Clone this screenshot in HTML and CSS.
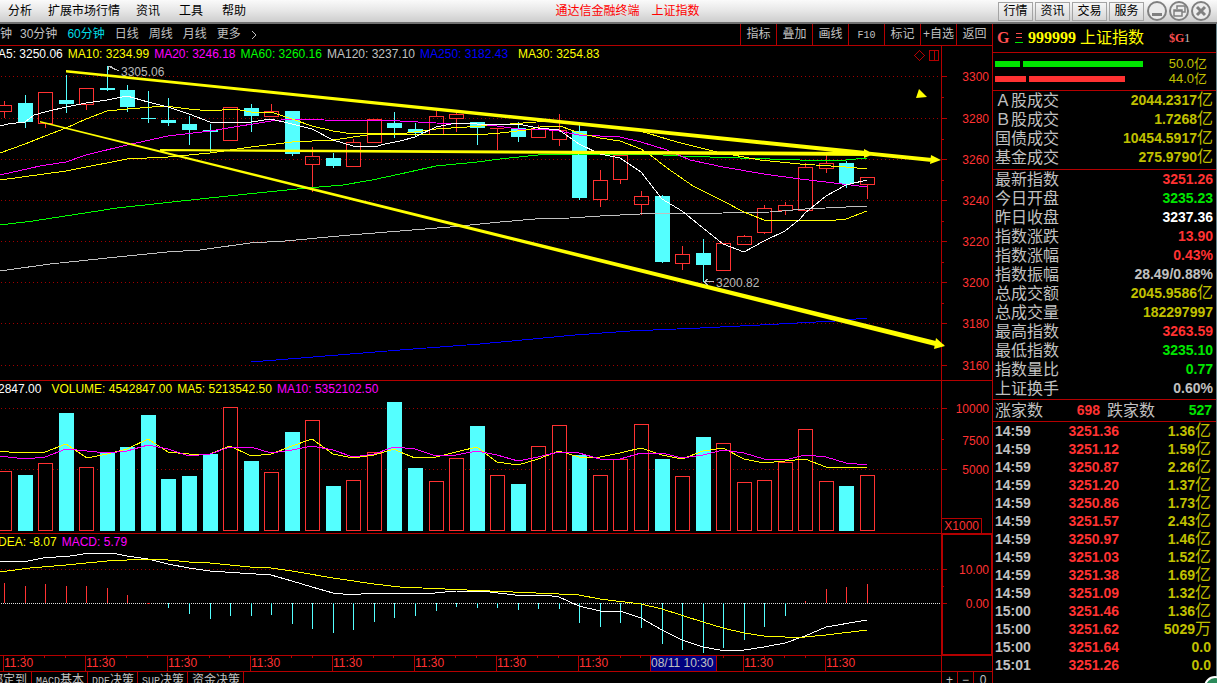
FILE: index.html
```html
<!DOCTYPE html>
<html lang="zh-CN">
<head>
<meta charset="utf-8">
<title>通达信金融终端 上证指数</title>
<link rel="stylesheet" href="styles.css">
</head>
<body>
<header class="titlebar">
  <nav class="menu">
    <button>分析</button><button>扩展市场行情</button><button>资讯</button><button>工具</button><button>帮助</button>
  </nav>
  <h1 class="caption"><span>通达信金融终端</span><span>上证指数</span></h1>
  <div class="quick">
    <button class="quick-btn">行情</button><button class="quick-btn">资讯</button><button class="quick-btn">交易</button><button class="quick-btn">服务</button>
  </div>
  <div class="window-btns">
    <button aria-label="最小化"><svg viewBox="0 0 20 20"><circle cx="10" cy="10" r="9" /><path class="thick" d="M5 13.500h10"/></svg></button>
    <button aria-label="还原"><svg viewBox="0 0 20 20"><circle cx="10" cy="10" r="9"/><path class="mid" d="M8 8V5h8v6h-3M5 9h8v6H5zM5 10h8"/></svg></button>
    <button aria-label="关闭"><svg viewBox="0 0 20 20"><circle cx="10" cy="10" r="9"/><path class="thick" d="M6 6l8 8M14 6l-8 8"/></svg></button>
  </div>
</header>

<div class="workspace">
  <main class="charts">
    <div class="toolbar">
      <nav class="periods">
        <button>钟</button><button>30分钟</button><button class="active">60分钟</button><button>日线</button><button>周线</button><button>月线</button><button>更多</button>
        <button aria-label="展开"><svg class="chevron" viewBox="0 0 6 10"><path d="M1 1l4 4-4 4"/></svg></button>
      </nav>
      <div class="tools">
        <button>指标</button><button>叠加</button><button>画线</button><button><span class="mono">F10</span></button><button>标记</button><button>+自选</button><button>返回</button>
      </div>
    </div>

    <section class="panel price">
      <div class="plot">
        <svg class="graph" viewBox="0 46 941 334" preserveAspectRatio="none">
          <path class="grid" d="M1 76.500H941M1 118.500H941M1 159.500H941M1 200.500H941M1 241.500H941M1 282.500H941M1 323.500H941M1 365.500H941"/>
          <path class="up" d="M-2.500 105.500h14v6h-14zM4.500 101v4M4.500 112v6M38.500 92.500h14v31h-14zM45.500 124v4M79.500 88.500h14v16h-14zM86.500 105v5M223.500 107.500h14v33h-14zM264.500 111.500h14v5h-14zM271.500 104v7M305.500 156.500h14v8h-14zM312.500 147v9M312.500 165v27M346.500 142.500h14v24h-14zM353.500 139v3M367.500 119.500h14v23h-14zM429.500 116.500h14v18h-14zM436.500 111v5M449.500 114.500h14v4h-14zM456.500 112v2M456.500 119v13M490 128.500h14M497.500 128v22M531.500 129.500h14v8h-14zM538.500 125v4M552.500 130.500h14v9h-14zM559.500 114v16M559.500 140v6M593.500 180.500h14v19h-14zM600.500 170v10M600.500 200v7M613.500 155.500h14v24h-14zM620.500 180v4M634.500 196.500h14v8h-14zM641.500 191v5M641.500 205v10M675.500 254.500h14v9h-14zM682.500 246v8M682.500 264v6M716.500 243.500h14v27h-14zM737.500 236.500h14v8h-14zM744.500 235v1M757.500 208.500h14v24h-14zM764.500 205v3M764.500 233v1M778.500 205.500h14v5h-14zM785.500 202v3M785.500 211v4M798.500 167.500h14v43h-14zM805.500 163v4M819.500 163.500h14v5h-14zM826.500 155v8M826.500 169v4M860.500 177.500h14v7h-14zM867.500 185v14"/>
          <path class="down" d="M18 103h15v19h-15zM59 100h15v4h-15zM100 88h15v2h-15zM120 90h15v17h-15zM141 118h15v1h-15zM161 120h15v3h-15zM182 124h15v6h-15zM203 130h15v2h-15zM244 108h15v8h-15zM285 111h15v43h-15zM326 158h15v8h-15zM387 123h15v5h-15zM408 129h15v4h-15zM470 122h15v6h-15zM511 128h15v9h-15zM572 131h15v67h-15zM655 196h15v66h-15zM696 253h15v12h-15zM839 163h15v21h-15z"/>
          <path class="down-wick" d="M25.500 95v33M66.500 75v38M107.500 66v25M127.500 85v27M148.500 91v32M168.500 98v28M189.500 116v29M210.500 124v29M251.500 104v28M292.500 111v45M333.500 153v15M394.500 112v26M415.500 123v14M477.500 122v23M518.500 122v20M579.500 125v75M662.500 195v68M703.500 239v43M846.500 161v27"/>
          <polyline class="line gray" points="0,271 50,264 117,257 167,252 200,250 250,243 285,241 350,235 400,231 450,227 500,222 535,219 570,218 600,216 640,214 723,213 770,212 805,209 867,206"/>
          <polyline class="line blue" points="251,362 400,350 480,344 575,335 630,331 700,328 760,325 835,321 867,318"/>
          <polyline class="line green" points="0,225 33,221 117,208 200,199 257,193 307,188 343,185 372,180 400,174 436,166 477,162 500,159 538,155 579,154 645,154 680,156 800,160 846,160 867,158"/>
          <polyline class="line yellow" points="0,180 66,171 127,159 168,157 210,153 251,147 292,142 333,140 374,134 400,134 436,129 467,127 510,124 550,121 579,124 613,128 640,131 677,142 717,152 760,160 800,164 846,167 867,169"/>
          <polyline class="line magenta" points="0,175 40,166 66,162 86,155 127,145 168,136 210,131 271,121 292,119 320,119 324,120 400,121 436,123 477,124 497,126 518,129 538,129 559,131 579,135 620,137 641,142 667,150 690,160 723,167 764,174 800,179 826,182 867,187"/>
          <polyline class="line yellow" points="0,153 25,144 45,136 66,128 86,119 107,111 127,109 165,106 189,109 210,111 235,109 251,112 271,112 292,119 312,126 333,131 353,134 374,133 400,134 466,134 477,135 500,133 526,130 540,127 560,126 579,133 600,138 620,141 641,149 649,154 667,168 693,186 723,201 744,212 764,220 785,221 800,220 826,221 846,219 867,211"/>
          <polyline class="line white" points="0,126 8,124 25,122 34,115 45,112 66,107 86,103 107,100 127,96 148,102 168,107 189,114 210,122 251,122 271,119 292,124 312,129 333,140 353,146 374,147 385,144 400,141 415,137 436,127 456,123 477,124 518,124 538,128 559,130 579,144 600,154 620,158 641,172 662,199 682,211 703,228 723,244 744,252 764,241 785,231 800,219 805,213 826,196 846,185 867,180"/>
          <path class="trend" d="M66 71L932 158V162L66 72.500zM66 70L866 151V154L66 71.500zM160 149L866 152V156L160 151zM864 149l10 5-10 4zM931 155l10 5-11 4zM40 121L936 341l-1 5L40 122.500zM936 338l9 8-11 3zM919 89l8 8-11 1z"/>
          <path class="pointer" d="M119 71l-11-5M108 70v-4h4M714 281.500h-10M708 279l-4 3 4 3"/>
          <text class="note" x="121" y="76">3305.06</text>
          <text class="note" x="716" y="287">3200.82</text>
          <path class="marker" d="M914.500 55.500l5-5 5 5-5 5zM929.500 50.500h9v10h-9zM934.500 50v11"/>
        </svg>
        <div class="legend"><span class="c-white">A5: 3250.06</span><span class="c-yellow">MA10: 3234.99</span><span class="c-magenta">MA20: 3246.18</span><span class="c-green">MA60: 3260.16</span><span class="c-gray">MA120: 3237.10</span><span class="c-blue">MA250: 3182.43</span><span class="c-yellow spaced">MA30: 3254.83</span></div>
      </div>
      <svg class="axis" viewBox="942 46 50 334" preserveAspectRatio="none">
        <path class="tick" d="M942 76.500h5M942 118.500h5M942 159.500h5M942 200.500h5M942 241.500h5M942 282.500h5M942 323.500h5M942 365.500h5M942 97.500h2M942 139.500h2M942 180.500h2M942 221.500h2M942 262.500h2M942 303.500h2M942 344.500h2"/>
        <text x="989" y="81">3300</text><text x="989" y="123">3280</text><text x="989" y="164">3260</text><text x="989" y="205">3240</text><text x="989" y="246">3220</text><text x="989" y="287">3200</text><text x="989" y="328">3180</text><text x="989" y="370">3160</text>
      </svg>
    </section>

    <section class="panel volume">
      <div class="plot">
        <svg class="graph" viewBox="0 381 941 152" preserveAspectRatio="none">
          <path class="grid" d="M1 408.500H941M1 469.500H941"/>
          <path class="up filled" d="M-2.500 530.500v-59h14v59zM38.500 530.500v-67h14v67zM79.500 530.500v-63h14v63zM223.500 530.500v-123h14v123zM264.500 530.500v-58h14v58zM305.500 530.500v-110h14v110zM346.500 530.500v-50h14v50zM367.500 530.500v-78h14v78zM429.500 530.500v-49h14v49zM449.500 530.500v-72h14v72zM490.500 530.500v-55h14v55zM531.500 530.500v-84h14v84zM552.500 530.500v-105h14v105zM593.500 530.500v-55h14v55zM613.500 530.500v-71h14v71zM634.500 530.500v-106h14v106zM675.500 530.500v-54h14v54zM716.500 530.500v-87h14v87zM737.500 530.500v-48h14v48zM757.500 530.500v-50h14v50zM778.500 530.500v-68h14v68zM798.500 530.500v-101h14v101zM819.500 530.500v-49h14v49zM860.500 530.500v-55h14v55z"/>
          <path class="down" d="M18 531v-56h15v56zM59 531v-118h15v118zM100 531v-78h15v78zM120 531v-84h15v84zM141 531v-116h15v116zM161 531v-52h15v52zM182 531v-55h15v55zM203 531v-77h15v77zM244 531v-70h15v70zM285 531v-99h15v99zM326 531v-45h15v45zM387 531v-129h15v129zM408 531v-63h15v63zM470 531v-105h15v105zM511 531v-47h15v47zM572 531v-76h15v76zM655 531v-72h15v72zM696 531v-94h15v94zM839 531v-45h15v45z"/>
          <polyline class="line yellow" points="0,451 9,452 25,453 45,452 66,444 87,458 107,454 127,449 148,439 168,452 189,454 210,454 230,446 251,456 271,454 292,446 312,439 333,454 353,458 374,455 394,449 400,452 415,458 436,457 456,452 477,447 497,462 518,465 538,459 559,451 579,457 600,457 620,453 641,448 662,455 682,459 703,451 723,448 744,459 764,463 785,461 805,459 826,467 846,468 867,467"/>
          <polyline class="line magenta" points="0,456 25,459 45,457 66,449 87,451 107,453 127,451 148,445 168,449 189,456 210,454 230,447 251,447 271,453 292,450 312,446 333,450 353,457 374,454 394,447 415,449 436,456 456,455 477,451 497,455 518,461 538,457 559,452 579,453 600,459 620,459 641,453 662,453 682,458 703,455 723,450 744,453 764,459 785,460 805,455 826,457 846,463 867,465"/>
        </svg>
        <div class="legend"><span class="c-white">2847.00</span><span class="c-yellow spaced">VOLUME: 4542847.00</span><span class="c-yellow">MA5: 5213542.50</span><span class="c-magenta">MA10: 5352102.50</span></div>
      </div>
      <svg class="axis" viewBox="942 381 50 152" preserveAspectRatio="none">
        <path class="tick" d="M942 408.500h5M942 439.500h2M942 469.500h5M942 518.500h39.500v15"/>
        <text x="989" y="413">10000</text><text x="989" y="445">7500</text><text x="989" y="474">5000</text><text x="979" y="530">X1000</text>
      </svg>
    </section>

    <section class="panel macd">
      <div class="plot">
        <svg class="graph" viewBox="0 534 941 121" preserveAspectRatio="none">
          <path class="grid" d="M1 569.500H941"/>
          <path class="zero" d="M1 603.500H941"/>
          <path class="up" d="M4.500 603v-20M25.500 603v-17M45.500 603v-19M66.500 603v-17M86.500 603v-17M107.500 603v-15M127.500 603v-8M147 603.500h3M805.500 603v-2M826.500 603v-14M846.500 603v-16M867.500 603v-19"/>
          <path class="down-wick" d="M168.500 603v5M189.500 603v11M210.500 603v16M230.500 603v13M251.500 603v13M271.500 603v12M292.500 603v21M312.500 603v26M333.500 603v30M353.500 603v27M374.500 603v19M394.500 603v15M415.500 603v13M436.500 603v8M456.500 603v4M477.500 603v5M497.500 603v5M518.500 603v7M538.500 603v6M559.500 603v6M579.500 603v20M600.500 603v24M620.500 603v20M641.500 603v25M662.500 603v41M682.500 603v47M703.500 603v50M723.500 603v45M744.500 603v37M764.500 603v24M785.500 603v13"/>
          <polyline class="line white" points="0,562 28,561 43,558 70,556 90,553 107,553 117,554 127,556 148,559 168,564 189,568 210,571 240,573 271,575 292,581 312,587 333,593 353,595 370,593 400,593 424,594 456,591 490,592 515,595 545,595 559,597 579,606 600,611 620,611 641,618 662,630 682,640 703,647 720,650 744,650 764,647 785,643 805,636 826,627 867,620"/>
          <polyline class="line yellow" points="0,572 30,568 66,565 107,561 127,560 148,559 168,560 189,562 210,563 250,567 271,568 292,571 333,578 374,584 400,587 467,590 559,594 579,595 600,599 641,604 662,609 703,622 723,628 744,633 764,636 785,637 805,637 826,635 867,630"/>
        </svg>
        <div class="legend"><span class="c-yellow">DEA: -8.07</span><span class="c-magenta">MACD: 5.79</span></div>
      </div>
      <svg class="axis" viewBox="942 534 50 121" preserveAspectRatio="none">
        <path class="frame" d="M942 534.500h50M991 534v121M942 654.500h50M942.500 534v121"/>
        <path class="tick" d="M942 569.500h5M942 603.500h5M942 586.500h2"/>
        <text x="989" y="574">10.00</text><text x="989" y="608">0.00</text>
      </svg>
    </section>

    <div class="timeline">
      <svg class="minor" viewBox="0 0 941 15" preserveAspectRatio="none"><path class="tick" d="M24.500 0v2M44.500 0v2M65.500 0v2M106.500 0v2M126.500 0v2M147.500 0v2M188.500 0v2M209.500 0v2M229.500 0v2M271.500 0v2M291.500 0v2M312.500 0v2M353.500 0v2M373.500 0v2M393.500 0v2M435.500 0v2M455.500 0v2M476.500 0v2M517.500 0v2M537.500 0v2M558.500 0v2M599.500 0v2M620.500 0v2M640.500 0v2M723.500 0v2M764.500 0v2M784.500 0v2M805.500 0v2"/></svg>
      <span></span><time>11:30</time><time>11:30</time><time>11:30</time><time>11:30</time><time>11:30</time><time>11:30</time><time>11:30</time><time>11:30</time><time class="cursor">08/11 10:30</time><time></time><time>11:30</time><time>11:30</time>
    </div>

    <div class="tabs">
      <button class="cut">绑定到</button><button><span class="mono">MACD</span>基本</button><button><span class="mono">DDE</span>决策</button><button><span class="mono">SUP</span>决策</button><button>资金决策</button>
      <div class="zoomers"><button>+</button><button>−</button><button>0</button></div>
    </div>
  </main>

  <aside class="quote">
    <div class="symbol">
      <b class="flag">G</b>
      <svg class="bars" viewBox="0 0 8 10"><path class="r" d="M1 .5h6M1 4.500h6"/><path class="g" d="M0 9.500h8"/></svg>
      <b class="code">999999</b><span class="name">上证指数</span><span class="tag"><b>$G</b>1</span>
    </div>
    <div class="flows">
      <div class="flow buy"><i class="short"></i><i class="long"></i><span>50.0亿</span></div>
      <div class="flow sell"><i class="short"></i><i class="long"></i><span>44.0亿</span></div>
    </div>
    <table class="stats">
      <tr><th>Ａ股成交</th><td class="c-gold">2044.2317<span>亿</span></td></tr>
      <tr><th>Ｂ股成交</th><td class="c-gold">1.7268<span>亿</span></td></tr>
      <tr><th>国债成交</th><td class="c-gold">10454.5917<span>亿</span></td></tr>
      <tr><th>基金成交</th><td class="c-gold">275.9790<span>亿</span></td></tr>
    </table>
    <table class="stats">
      <tr><th>最新指数</th><td class="c-red">3251.26</td></tr>
      <tr><th>今日开盘</th><td class="c-lime">3235.23</td></tr>
      <tr><th>昨日收盘</th><td class="c-white">3237.36</td></tr>
      <tr><th>指数涨跌</th><td class="c-red">13.90</td></tr>
      <tr><th>指数涨幅</th><td class="c-red">0.43%</td></tr>
      <tr><th>指数振幅</th><td class="c-gray">28.49/0.88%</td></tr>
      <tr><th>总成交额</th><td class="c-gold">2045.9586<span>亿</span></td></tr>
      <tr><th>总成交量</th><td class="c-gold">182297997</td></tr>
      <tr><th>最高指数</th><td class="c-red">3263.59</td></tr>
      <tr><th>最低指数</th><td class="c-lime">3235.10</td></tr>
      <tr><th>指数量比</th><td class="c-lime">0.77</td></tr>
      <tr><th>上证换手</th><td class="c-gray">0.60%</td></tr>
    </table>
    <div class="breadth"><span>涨家数</span><b class="c-red">698</b><span>跌家数</span><b class="c-lime">527</b></div>
    <table class="trades">
      <tr><td>14:59</td><td>3251.36</td><td>1.36<span>亿</span></td></tr>
      <tr><td>14:59</td><td>3251.12</td><td>1.59<span>亿</span></td></tr>
      <tr><td>14:59</td><td>3250.87</td><td>2.26<span>亿</span></td></tr>
      <tr><td>14:59</td><td>3251.20</td><td>1.37<span>亿</span></td></tr>
      <tr><td>14:59</td><td>3250.86</td><td>1.73<span>亿</span></td></tr>
      <tr><td>14:59</td><td>3251.57</td><td>2.43<span>亿</span></td></tr>
      <tr><td>14:59</td><td>3250.97</td><td>1.46<span>亿</span></td></tr>
      <tr><td>14:59</td><td>3251.03</td><td>1.52<span>亿</span></td></tr>
      <tr><td>14:59</td><td>3251.38</td><td>1.69<span>亿</span></td></tr>
      <tr><td>14:59</td><td>3251.09</td><td>1.32<span>亿</span></td></tr>
      <tr><td>15:00</td><td>3251.46</td><td>1.36<span>亿</span></td></tr>
      <tr><td>15:00</td><td>3251.62</td><td>5029<span>万</span></td></tr>
      <tr><td>15:00</td><td>3251.64</td><td>0.0</td></tr>
      <tr><td>15:01</td><td>3251.26</td><td>0.0</td></tr>
    </table>
  </aside>
</div>
</body>
</html>
```
FILE: styles.css
```css
* { box-sizing: border-box; }

body {
  margin: 0;
  height: 100vh;
  display: flex;
  flex-direction: column;
  overflow: hidden;
  background: #000;
  color: #c0c0c0;
  font: 12px/15px "Liberation Sans", "Noto Sans CJK SC", sans-serif;
}

button {
  padding: 0;
  border: 0;
  background: none;
  color: inherit;
  font: inherit;
  white-space: nowrap;
}

.c-white { color: #fff; }
.c-yellow { color: #ff0; }
.c-magenta { color: #f0f; }
.c-green { color: #0f0; }
.c-gray { color: #c0c0c0; }
.c-blue { color: #00f; }
.c-red { color: #ff3232; }
.c-lime { color: #00e600; }
.c-gold { color: #c0c000; }
.mono { font: 10px/12px "Liberation Mono", monospace; }

/* Title bar */
.titlebar {
  flex: none;
  height: 24px;
  display: flex;
  align-items: center;
  justify-content: space-between;
  position: relative;
  border-bottom: 2px solid #707070;
  background: linear-gradient(#fafafa, #e6e6e6 50%, #cdcdcd);
  color: #000;
}
.menu { display: flex; gap: 16px; padding-left: 8px; flex: 1; }
.menu button:nth-child(n+3) { margin-right: 3px; }
.caption {
  margin: 0;
  position: absolute;
  left: 0;
  right: 0;
  top: 3px;
  padding-left: 38px;
  display: flex;
  justify-content: center;
  gap: 12px;
  font-size: 12px;
  line-height: 16px;
  font-weight: normal;
  color: #f00;
  pointer-events: none;
}
.quick { display: flex; gap: 2px; margin-right: 3px; }
.quick-btn {
  width: 35px;
  height: 19px;
  border: 1px solid #a4a4a4;
  background: linear-gradient(#f6f6f6, #d6d6d6);
  line-height: 16px;
}
.window-btns { display: flex; gap: 2px; margin-right: 6px; }
.window-btns button { height: 20px; }
.window-btns svg { display: block; width: 20px; height: 20px; fill: #ececec; stroke: #808080; stroke-width: 2; }
.window-btns .thick { stroke-width: 3; }
.window-btns .mid { stroke-width: 1.500; }

.workspace { flex: 1; min-height: 0; display: flex; position: relative; border-right: 1px solid #6c8890; }
.workspace::after {
  content: "";
  position: absolute;
  right: -10px;
  bottom: -15px;
  width: 18px;
  height: 18px;
  border: 2px solid #fff;
  border-radius: 50%;
  background: #2a8a5a;
}
.charts { flex: 1; min-width: 0; display: flex; flex-direction: column; }

/* Period and tool strip */
.toolbar {
  flex: none;
  height: 22px;
  display: flex;
  justify-content: space-between;
  border-bottom: 1px solid #b40000;
}
.periods { display: flex; align-items: center; gap: 10px; }
.periods button:first-child { margin-right: -2px; }
.periods .active { color: #00dce6; }
.chevron { display: block; width: 6px; height: 10px; fill: none; stroke: #c0c0c0; }
.tools { display: flex; }
.tools button { width: 36px; border-left: 1px solid #b40000; }

/* Chart panels */
.panel { display: flex; min-height: 0; border-bottom: 1px solid #b40000; }
.price { flex: 334 1 0; }
.volume { flex: 152 1 0; }
.macd { flex: 121 1 0; }
.plot { flex: 1; min-width: 0; position: relative; z-index: 1; }
.graph { display: block; width: 100%; height: 100%; overflow: visible; shape-rendering: crispEdges; }
.axis { display: block; flex: none; width: 51px; height: 100%; border-left: 1px solid #b40000; shape-rendering: crispEdges; }
.axis text { fill: #ff3232; text-anchor: end; }
.legend { position: absolute; left: -2px; top: 1px; display: flex; gap: 5px; white-space: nowrap; }
.legend .spaced { margin-left: 5px; }

.grid { fill: none; stroke: #a00000; stroke-dasharray: 1 3; }
.zero { fill: none; stroke: #e0e0e0; stroke-dasharray: 1 1; }
.up { fill: none; stroke: #ff3232; }
.filled { fill: #000; }
.down { fill: #54ffff; }
.down-wick { fill: none; stroke: #54ffff; }
.line { fill: none; stroke-width: 1; }
.white { stroke: #fff; }
.yellow { stroke: #ff0; }
.magenta { stroke: #f0f; }
.green { stroke: #0f0; }
.gray { stroke: #c0c0c0; }
.blue { stroke: #00f; }
.trend { fill: #ff0; shape-rendering: auto; }
.pointer { fill: none; stroke: #c0c0c0; }
.note { fill: #b8b8b8; }
.marker, .tick { fill: none; stroke: #b40000; }
.frame { fill: none; stroke: #b40000; stroke-width: 1; }

/* Time scale */
.timeline {
  flex: none;
  height: 16px;
  position: relative;
  display: grid;
  grid-template-columns: 3fr 82fr 82fr 83fr 82fr 82fr 82fr 82fr 72fr 66fr 27fr 82fr 116fr 51px;
  border-bottom: 1px solid #b40000;
  color: #ff3232;
}
.timeline::after { content: ""; border-left: 1px solid #b40000; }
.timeline time { border-left: 1px solid #b40000; white-space: nowrap; }
.timeline .cursor { background: #000080; color: #c0c0c0; }
.minor { position: absolute; left: 0; top: 0; width: calc(100% - 51px); height: 15px; shape-rendering: crispEdges; }

.tabs { flex: none; height: 11px; display: flex; overflow: hidden; }
.tabs button { height: 16px; padding: 0 3px 0 4px; border-right: 1px solid #b40000; line-height: 16px; }
.tabs .cut { width: 32px; padding: 0 4px 0 0; direction: rtl; }
.zoomers { display: flex; margin-left: auto; }
.tabs .zoomers button { width: 16px; padding: 0; border-right: 0; border-left: 1px solid #b40000; }
.tabs .zoomers button:last-child { width: 19px; }

/* Quote sidebar */
.quote { flex: none; width: 224px; border-left: 1px solid #b40000; overflow: hidden; }
.symbol {
  height: 29px;
  display: flex;
  align-items: center;
  padding-left: 4px;
  border-bottom: 1px solid #b40000;
  font: 16px/20px "Liberation Serif", "Noto Sans CJK SC", serif;
}
.flag { width: 18px; color: #ff5050; }
.bars { width: 8px; height: 10px; margin-right: 5px; fill: none; shape-rendering: crispEdges; }
.bars .r { stroke: #ff5050; }
.bars .g { stroke: #00e600; }
.code { width: 52px; color: #ff0; }
.name { width: 89px; color: #ff0; }
.tag { font-size: 12px; }
.tag b { color: #ff5050; }

.flows { height: 38px; padding: 3px 9px 4px 2px; border-bottom: 1px solid #b40000; }
.flow { display: flex; align-items: center; gap: 3px; height: 15px; }
.flow i { height: 6px; }
.flow span { margin-left: auto; font-size: 13px; color: #c0c000; }
.buy i { background: #00e600; }
.sell i { background: #ff3232; }
.buy .short { width: 25px; }
.buy .long { width: 120px; }
.sell .short { width: 31px; }
.sell .long { width: 96px; }

table { width: 100%; border-collapse: separate; border-spacing: 0; }
th, td { padding: 0; }
td { font-size: 14px; font-weight: bold; text-align: right; }
td span { font-size: 16px; line-height: 0; font-weight: normal; }
.stats { padding-right: 3px; padding-left: 2px; border-bottom: 1px solid #b40000; }
.stats:nth-of-type(1) { padding-bottom: 2px; }
.stats:nth-of-type(2) { padding-bottom: 1px; }
.stats tr { height: 19px; line-height: 19px; }
.stats th { text-align: left; font-size: 16px; font-weight: normal; }

.breadth {
  height: 22px;
  display: grid;
  grid-template-columns: 65px 40px 65px 1fr;
  align-items: center;
  padding: 0 4px 0 2px;
  border-bottom: 1px solid #b40000;
  font-size: 16px;
}
.breadth b { font-size: 14px; text-align: right; }
.breadth span:nth-child(3) { padding-left: 7px; }

.trades { padding: 0 5px 0 2px; }
.trades tr { height: 18px; line-height: 18px; }
.trades td:first-child { text-align: left; width: 36px; }
.trades td:nth-child(2) { width: 88px; color: #ff3232; }
.trades td:nth-child(3) { color: #c0c000; }
```
